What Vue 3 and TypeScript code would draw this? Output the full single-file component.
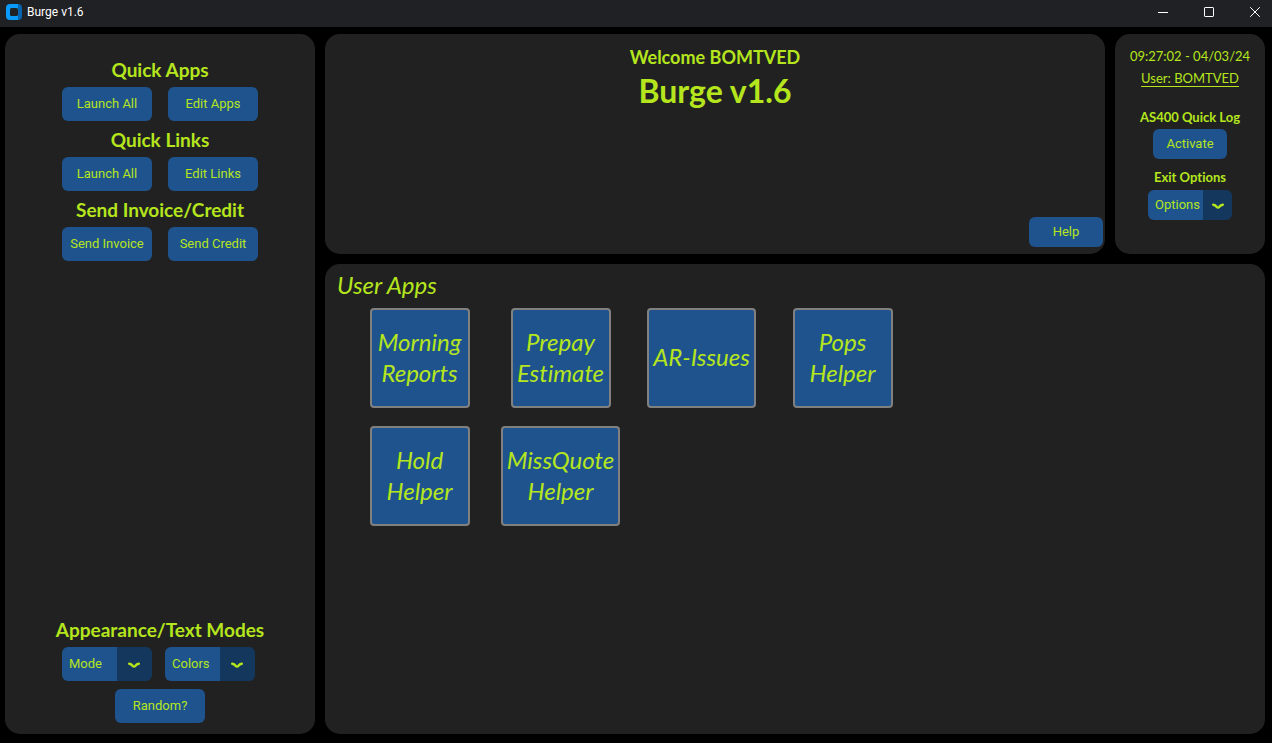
<script setup lang="ts">
import { ref } from 'vue'

interface ActionGroup {
  title: string
  actions: string[]
}

const user = 'BOMTVED'
const timestamp = '09:27:02 - 04/03/24'

const groups: ActionGroup[] = [
  { title: 'Quick Apps', actions: ['Launch All', 'Edit Apps'] },
  { title: 'Quick Links', actions: ['Launch All', 'Edit Links'] },
  { title: 'Send Invoice/Credit', actions: ['Send Invoice', 'Send Credit'] },
]

const apps: string[][] = [
  ['Morning', 'Reports'],
  ['Prepay', 'Estimate'],
  ['AR-Issues'],
  ['Pops', 'Helper'],
  ['Hold', 'Helper'],
  ['MissQuote', 'Helper'],
]

const mode = ref('Mode')
const colors = ref('Colors')
const exitOption = ref('Options')
</script>

<template>
  <div class="window">
    <header class="titlebar">
      <svg class="logo" width="16" height="16" viewBox="0 0 16 16" aria-hidden="true">
        <path d="M4 0H12V16H4Q0 16 0 12V4Q0 0 4 0Z" fill="#0a9bfa" />
        <path d="M12 0Q16 0 16 4V12Q16 16 12 16Z" fill="#0563b0" />
        <rect x="4" y="4" width="8" height="8" rx="1.5" fill="#202124" />
      </svg>
      <span class="caption">Burge v1.6</span>
      <div class="controls">
        <button type="button" aria-label="Minimize">
          <svg width="10" height="10" viewBox="0 0 10 10"><path d="M0 5.5H10" /></svg>
        </button>
        <button type="button" aria-label="Maximize">
          <svg width="10" height="10" viewBox="0 0 10 10"><rect x=".5" y=".5" width="9" height="9" rx=".6" /></svg>
        </button>
        <button type="button" aria-label="Close">
          <svg width="10" height="10" viewBox="0 0 10 10"><path d="M.2 .2L9.8 9.8M9.8 .2L.2 9.8" /></svg>
        </button>
      </div>
    </header>

    <main class="layout">
      <aside class="panel sidebar">
        <section v-for="group in groups" :key="group.title">
          <h2>{{ group.title }}</h2>
          <div class="pair">
            <button v-for="action in group.actions" :key="action" type="button" class="btn">{{ action }}</button>
          </div>
        </section>
        <section class="appearance">
          <h2>Appearance/Text Modes</h2>
          <div class="menus">
            <div class="menu">
              <select v-model="mode" aria-label="Mode"><option>Mode</option></select>
              <svg class="chevron" width="12" height="7" viewBox="0 0 12 7"><path d="M1.2 1.8Q3.4 2.2 4.6 3.8Q6 5.2 7.4 3.8Q8.6 2.2 10.8 1.8" /></svg>
            </div>
            <div class="menu">
              <select v-model="colors" aria-label="Colors"><option>Colors</option></select>
              <svg class="chevron" width="12" height="7" viewBox="0 0 12 7"><path d="M1.2 1.8Q3.4 2.2 4.6 3.8Q6 5.2 7.4 3.8Q8.6 2.2 10.8 1.8" /></svg>
            </div>
          </div>
          <button type="button" class="btn">Random?</button>
        </section>
      </aside>

      <section class="panel welcome">
        <p>Welcome {{ user }}</p>
        <h1>Burge v1.6</h1>
        <button type="button" class="btn small help">Help</button>
      </section>

      <section class="panel status">
        <time>{{ timestamp }}</time>
        <span class="user">User: {{ user }}</span>
        <h3>AS400 Quick Log</h3>
        <button type="button" class="btn small">Activate</button>
        <h3>Exit Options</h3>
        <div class="menu short">
          <select v-model="exitOption" aria-label="Exit Options"><option>Options</option></select>
          <svg class="chevron" width="12" height="7" viewBox="0 0 12 7"><path d="M1.2 1.8Q3.4 2.2 4.6 3.8Q6 5.2 7.4 3.8Q8.6 2.2 10.8 1.8" /></svg>
        </div>
      </section>

      <section class="panel apps">
        <h2>User Apps</h2>
        <div class="tiles">
          <button v-for="app in apps" :key="app.join(' ')" type="button" class="tile">
            <span v-for="line in app" :key="line">{{ line }}</span>
          </button>
        </div>
      </section>
    </main>
  </div>
</template>

<style>
body {
  background: #000;
}
</style>

<style scoped>
.window {
  display: flex;
  flex-direction: column;
  min-height: 100vh;
  color: #b5e61d;
  font-family: Lato, sans-serif;
}

.window * {
  box-sizing: border-box;
  font-variant-ligatures: none;
}

h1,
h2,
h3,
p {
  margin: 0;
}

.titlebar {
  display: flex;
  align-items: center;
  height: 27px;
  padding: 0 0 4px 6px;
  background: #202124;
  color: #fff;
}

.caption {
  margin-left: 5px;
  font: 12px/16px Roboto, sans-serif;
}

.controls {
  display: flex;
  margin-left: auto;
}

.controls button {
  display: flex;
  align-items: center;
  justify-content: center;
  width: 46px;
  height: 23px;
  padding: 0 0 0 12px;
  border: 0;
  background: none;
}

.controls svg {
  fill: none;
  stroke: #fff;
  stroke-width: 1;
}

.layout {
  flex: 1;
  display: grid;
  grid-template-columns: 310px 1fr 150px;
  grid-template-rows: 220px 1fr;
  gap: 10px;
  padding: 7px 7px 9px 5px;
}

.panel {
  border-radius: 15px;
  background: #212121;
}

.sidebar {
  grid-row: 1 / 3;
  display: flex;
  flex-direction: column;
  padding: 17px 0 11px;
}

.sidebar section {
  display: flex;
  flex-direction: column;
  align-items: center;
}

.sidebar .appearance {
  margin-top: auto;
}

.sidebar h2 {
  padding-top: 2px;
  font-size: 19px;
  line-height: 34px;
  font-weight: 700;
}

.pair {
  display: flex;
  gap: 16px;
}

.menus {
  display: flex;
  gap: 13px;
  margin-bottom: 8px;
  padding-right: 3px;
}

.btn {
  width: 90px;
  height: 34px;
  padding: 0;
  border: 0;
  border-radius: 6px;
  background: #1f538d;
  color: inherit;
  font: 13px/16px Roboto, sans-serif;
}

.btn.small {
  width: 74px;
  height: 30px;
}

.menu {
  position: relative;
  width: 90px;
  height: 34px;
}

.menu select {
  appearance: none;
  width: 100%;
  height: 100%;
  padding: 0 0 0 7px;
  border: 0;
  border-radius: 6px;
  background: linear-gradient(to right, #1f538d 55px, #14375e 55px);
  color: inherit;
  font: 13px/16px Roboto, sans-serif;
}

.menu.short {
  width: 84px;
  height: 30px;
  margin-top: 1px;
}

.chevron {
  position: absolute;
  top: calc(50% - 2px);
  right: 12px;
  fill: none;
  stroke: #b5e61d;
  stroke-width: 2.4;
  stroke-linecap: round;
  pointer-events: none;
}

.short .chevron {
  right: 8px;
}

.welcome {
  display: flex;
  flex-direction: column;
  align-items: center;
  padding: 10px 2px 7px;
}

.welcome p {
  font-size: 18px;
  line-height: 26px;
  font-weight: 700;
}

.welcome h1 {
  font-size: 32px;
  line-height: 42px;
  font-weight: 700;
}

.help {
  align-self: flex-end;
  margin-top: auto;
}

.status {
  display: flex;
  flex-direction: column;
  align-items: center;
  padding-top: 11px;
  font-size: 13px;
  line-height: 22px;
}

.user {
  text-decoration: underline;
  text-underline-offset: 3px;
}

.status h3 {
  font-size: 13px;
  line-height: 24px;
  font-weight: 700;
}

.user + h3 {
  margin-top: 16px;
}

.btn + h3 {
  margin-top: 6px;
}

.apps {
  grid-column: 2 / 4;
  padding: 4px 12px;
}

.apps h2 {
  margin-bottom: 6px;
  font-size: 24px;
  line-height: 34px;
  font-weight: 400;
  font-style: italic;
}

.tiles {
  display: grid;
  grid-template-columns: repeat(4, 141px);
  justify-items: center;
  gap: 18px 0;
  padding-left: 12px;
}

.tile {
  display: flex;
  flex-direction: column;
  align-items: center;
  justify-content: center;
  min-width: 100px;
  height: 100px;
  padding: 0 4px 3px;
  border: 2px solid #808080;
  border-radius: 4px;
  background: #1f538d;
  color: inherit;
  font: italic 24px/31px Lato, sans-serif;
}
</style>
